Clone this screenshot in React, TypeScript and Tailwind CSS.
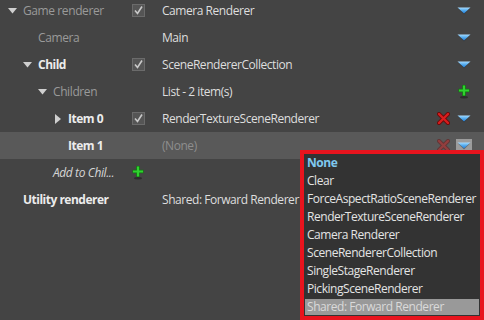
import React from "react";

const FONT = { fontFamily: '"Open Sans", "Noto Sans", sans-serif' };

function TriDown({ color = "#cfcfcf" }: { color?: string }) {
  return (
    <svg width="9" height="6" viewBox="0 0 9 6" className="block">
      <polygon points="0,0 9,0 4.5,5.5" fill={color} />
    </svg>
  );
}

function TriRight({ color = "#cfcfcf" }: { color?: string }) {
  return (
    <svg width="6" height="10" viewBox="0 0 6 10" className="block">
      <polygon points="0,0 6,5 0,10" fill={color} />
    </svg>
  );
}

function Check() {
  return (
    <div className="w-[13px] h-[13px] bg-[#555555] border border-[#6b6b6b] flex items-center justify-center">
      <svg width="11" height="11" viewBox="0 0 11 11" className="block">
        <path d="M2 5.5 L4.5 8.5 L9 1.5" stroke="#c9c9c9" strokeWidth="1.6" fill="none" />
      </svg>
    </div>
  );
}

function BlueArrow({ id }: { id: string }) {
  return (
    <svg width="14" height="8" viewBox="0 0 14 8" className="block">
      <defs>
        <linearGradient id={id} x1="0" y1="0" x2="0" y2="1">
          <stop offset="0" stopColor="#a9dcff" />
          <stop offset="0.45" stopColor="#5ab0f0" />
          <stop offset="1" stopColor="#1e7ad6" />
        </linearGradient>
      </defs>
      <polygon points="1,1.5 13,1.5 7,7.5" fill="#2a2a2a" opacity="0.45" />
      <polygon points="0.5,0.5 13.5,0.5 7,6.5" fill={`url(#${id})`} />
    </svg>
  );
}

function RedX({ faded = false }: { faded?: boolean }) {
  return (
    <svg width="13" height="13" viewBox="0 0 13 13" className="block" style={{ opacity: faded ? 0.45 : 1 }}>
      <path d="M2 2 L11 11 M11 2 L2 11" stroke="#6a0a0a" strokeWidth="4" strokeLinecap="round" />
      <path d="M2 2 L11 11 M11 2 L2 11" stroke="#d81e1e" strokeWidth="2.4" strokeLinecap="round" />
    </svg>
  );
}

function GreenPlus() {
  return (
    <svg width="14" height="15" viewBox="0 0 14 15" className="block">
      <ellipse cx="7" cy="13.2" rx="4" ry="1.2" fill="#1c1c1c" opacity="0.6" />
      <path d="M7 1 V12 M1.5 6.5 H12.5" stroke="#0f7a0f" strokeWidth="3.6" />
      <path d="M7 1.5 V11.5 M2 6.5 H12" stroke="#2fd12f" strokeWidth="2.2" />
    </svg>
  );
}

type RowProps = {
  indent: number;
  arrow?: "down" | "right";
  label: string;
  labelClass: string;
  check?: boolean;
  plusInCheck?: boolean;
  value?: string;
  valueClass?: string;
  x?: "on" | "faded";
  right?: "arrow" | "arrowBox" | "plus";
  highlight?: boolean;
  id: string;
};

function Row(p: RowProps) {
  return (
    <div className={`flex items-center h-[27px] ${p.highlight ? "bg-[#595959]" : ""}`}>
      <div className="w-[125px] shrink-0 flex items-center" style={{ paddingLeft: 8 + p.indent * 15 }}>
        <div className="w-[15px] shrink-0 flex items-center">
          {p.arrow === "down" && <TriDown />}
          {p.arrow === "right" && <div className="ml-[2px]"><TriRight /></div>}
        </div>
        <span className={`text-[12px] whitespace-nowrap ${p.labelClass}`}>{p.label}</span>
      </div>
      <div className="w-[37px] shrink-0 flex items-center pl-[7px]">
        {p.check && <Check />}
        {p.plusInCheck && <div className="-ml-[1px]"><GreenPlus /></div>}
      </div>
      <div className={`flex-1 text-[12px] tracking-[-0.45px] whitespace-nowrap ${p.valueClass ?? "text-[#dedede]"}`}>{p.value}</div>
      <div className="flex items-center pr-[12px] gap-[6px]">
        {p.x && <RedX faded={p.x === "faded"} />}
        {p.right === "arrow" && (
          <div className="w-[16px] h-[13px] flex items-center justify-center">
            <BlueArrow id={p.id} />
          </div>
        )}
        {p.right === "arrowBox" && (
          <div className="w-[16px] h-[13px] flex items-center justify-center bg-[#9c9c9c]">
            <BlueArrow id={p.id} />
          </div>
        )}
        {p.right === "plus" && (
          <div className="w-[16px] flex items-center justify-center">
            <GreenPlus />
          </div>
        )}
      </div>
    </div>
  );
}

const items = [
  "Clear",
  "ForceAspectRatioSceneRenderer",
  "RenderTextureSceneRenderer",
  "Camera Renderer",
  "SceneRendererCollection",
  "SingleStageRenderer",
  "PickingSceneRenderer",
];

export default function App() {
  return (
    <div className="w-[484px] h-[320px] bg-[#444444] relative overflow-hidden" style={FONT}>
      <div className="-mt-[3px]">
        <Row id="a0" indent={0} arrow="down" label="Game renderer" labelClass="text-[#9a9a9a] tracking-[-0.4px]" check value="Camera Renderer" right="arrow" />
        <Row id="a1" indent={1} label="Camera" labelClass="text-[#9a9a9a] tracking-[-0.4px]" value="Main" right="arrow" />
        <Row id="a2" indent={1} arrow="down" label="Child" labelClass="text-[#ececec] font-bold tracking-[-0.5px]" check value="SceneRendererCollection" right="arrow" />
        <Row id="a3" indent={2} arrow="down" label="Children" labelClass="text-[#9a9a9a] tracking-[-0.4px]" value="List - 2 item(s)" right="plus" />
        <Row id="a4" indent={3} arrow="right" label="Item 0" labelClass="text-[#ececec] font-bold tracking-[-0.5px]" check value="RenderTextureSceneRenderer" x="on" right="arrow" />
        <Row id="a5" indent={3} label="Item 1" labelClass="text-[#ececec] font-bold tracking-[-0.5px]" value="(None)" valueClass="text-[#8e8e8e]" x="faded" right="arrowBox" highlight />
        <Row id="a6" indent={2} label="Add to Chil..." labelClass="text-[#d6d6d6] italic tracking-[-0.4px]" plusInCheck />
        <Row id="a7" indent={0} label="Utility renderer" labelClass="text-[#ececec] font-bold tracking-[-0.5px]" value="Shared: Forward Renderer" />
      </div>

      <div className="absolute left-[300px] top-[150px] w-[184px] h-[170px] border-4 border-[#e8141e] bg-[#333333] text-[12px] tracking-[-0.45px]">
        <div className="h-[18px] p-[1px]">
          <div className="h-[16px] px-[2px] flex items-center font-bold text-[#7fc8ef] whitespace-nowrap">None</div>
        </div>
        {items.map((t) => (
          <div key={t} className="h-[18px] p-[1px]">
            <div className="h-[16px] px-[2px] flex items-center text-[#e4e4e4] whitespace-nowrap">{t}</div>
          </div>
        ))}
        <div className="h-[18px] p-[1px]">
          <div className="h-[16px] px-[2px] flex items-center bg-[#999999] text-[#dadada] whitespace-nowrap">Shared: Forward Renderer</div>
        </div>
      </div>
    </div>
  );
}
